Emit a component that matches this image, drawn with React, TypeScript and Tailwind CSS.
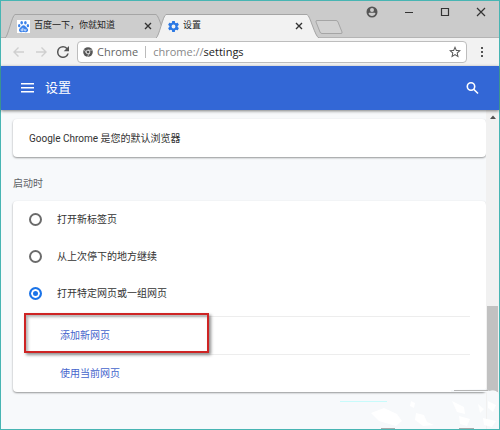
import { useState } from "react";
import type { ReactNode } from "react";

const startupOptions = [
	{ id: "new-tab", label: "打开新标签页" },
	{ id: "continue", label: "从上次停下的地方继续" },
	{ id: "specific", label: "打开特定网页或一组网页" },
];

function CloseIcon() {
	return (
		<svg viewBox="0 0 8 8" className="h-2 w-2" stroke="#333" strokeWidth="1.4">
			<path d="M1 1l6 6M7 1l-6 6" />
		</svg>
	);
}

function BaiduIcon() {
	return (
		<svg viewBox="0 0 13 13" className="h-[13px] w-[13px] shrink-0 bg-white" fill="#3b82ea">
			<ellipse cx="4.7" cy="2.7" rx="1.3" ry="1.8" />
			<ellipse cx="8.4" cy="2.7" rx="1.3" ry="1.8" />
			<ellipse cx="2.2" cy="5.7" rx="1.2" ry="1.6" />
			<ellipse cx="10.9" cy="5.7" rx="1.2" ry="1.6" />
			<path d="M6.5 5.2c1.3 0 1.8 1 2.6 1.8 1 1 2 1.7 2 3.1 0 1.5-1.2 2.3-2.5 2.1-.8-.1-1.4-.3-2.1-.3s-1.3.2-2.1.3C3.1 12.4 2 11.6 2 10.1c0-1.4 1-2.1 1.9-3.1.8-.8 1.3-1.8 2.6-1.8z" />
			<path d="M5.9 7.8v3H4.8a.8.8 0 0 1 0-1.7h1M7.3 8.9v1.3c0 .5.2.6.6.6h1V8.9" fill="none" stroke="#fff" strokeWidth=".7" />
		</svg>
	);
}

function GearIcon() {
	return (
		<svg viewBox="2 2 20 20" className="h-[11px] w-[11px] shrink-0" fill="#2b78e4">
			<path d="M19.43 12.98c.04-.32.07-.64.07-.98s-.03-.66-.07-.98l2.11-1.65c.19-.15.24-.42.12-.64l-2-3.46c-.12-.22-.39-.3-.61-.22l-2.49 1c-.52-.4-1.08-.73-1.69-.98l-.38-2.65C14.46 2.18 14.25 2 14 2h-4c-.25 0-.46.18-.49.42l-.38 2.65c-.61.25-1.17.59-1.69.98l-2.49-1c-.23-.09-.49 0-.61.22l-2 3.46c-.13.22-.07.49.12.64l2.11 1.65c-.04.32-.07.65-.07.98s.03.66.07.98l-2.11 1.65c-.19.15-.24.42-.12.64l2 3.46c.12.22.39.3.61.22l2.49-1c.52.4 1.08.73 1.69.98l.38 2.65c.03.24.24.42.49.42h4c.25 0 .46-.18.49-.42l.38-2.65c.61-.25 1.17-.59 1.69-.98l2.49 1c.23.09.49 0 .61-.22l2-3.46c.12-.22.07-.49-.12-.64l-2.11-1.65zM12 15.5a3.5 3.5 0 1 1 0-7 3.5 3.5 0 0 1 0 7z" />
		</svg>
	);
}

function Tab({ icon, title, active }: { icon: ReactNode; title: string; active?: boolean }) {
	return (
		<div className="relative -mr-3 flex h-6 w-full max-w-[163px] items-center gap-1 pr-4 pl-3">
			<svg
				viewBox="0 0 163 24"
				preserveAspectRatio="none"
				className="absolute inset-0 h-full w-full"
				fill={active ? "#f2f2f2" : "#cdcdcd"}
				stroke="#a5a5a5"
			>
				<path d="M0 24C3 23 7 1 10 .5H151C154 1 159 23 163 24" />
			</svg>
			<span className="relative">{icon}</span>
			<span className="relative flex-1 truncate text-[9px] text-[#222]">{title}</span>
			<button aria-label="关闭标签页" className="relative">
				<CloseIcon />
			</button>
		</div>
	);
}

function TitleBar() {
	return (
		<header className="flex h-[37px] justify-between border-b border-[#b4b4b4] bg-[#cbcbcb]">
			<div className="-mb-px flex flex-1 items-end pl-1">
				<Tab icon={<BaiduIcon />} title="百度一下，你就知道" />
				<Tab icon={<GearIcon />} title="设置" active />
				<button aria-label="新标签页" className="mb-1 ml-2">
					<svg viewBox="0 0 28 14" className="h-[14px] w-7" fill="#d2d2d2" stroke="#a5a5a5">
						<path d="M2 .5h19q1.5 0 2 1.5l4 10q.5 1.500-1 1.500H7q-1.500 0-2-1.500L1 2Q.5.5 2 .5z" />
					</svg>
				</button>
			</div>
			<div className="flex h-[22px] items-center gap-[26px] pr-[13px]">
				<button aria-label="用户">
					<svg viewBox="0 0 12 12" className="h-3 w-3" fill="#555">
						<path fillRule="evenodd" d="M6 .5a5.500 5.500 0 1 1 0 11 5.500 5.500 0 0 1 0-11zM6 2a2 2 0 1 0 0 4 2 2 0 0 0 0-4zM2.500 7.200C3.100 9 4.400 9.900 6 9.900s2.900-.9 3.500-2.700C8.700 6.500 7.400 6.800 6 6.800s-2.700-.3-3.500.4z" />
					</svg>
				</button>
				<button aria-label="最小化">
					<svg viewBox="0 0 10 10" className="h-[10px] w-[10px]" stroke="#333">
						<path d="M1 5.500h8" />
					</svg>
				</button>
				<button aria-label="最大化">
					<svg viewBox="0 0 10 10" className="h-[10px] w-[10px]" fill="none" stroke="#333" strokeWidth="1.2">
						<path d="M1.500 1.500h7v7h-7z" />
					</svg>
				</button>
				<button aria-label="关闭">
					<svg viewBox="0 0 10 10" className="h-[10px] w-[10px]" stroke="#333" strokeWidth="1.2">
						<path d="M1 1l8 8M9 1L1 9" />
					</svg>
				</button>
			</div>
		</header>
	);
}

function Toolbar() {
	return (
		<nav className="flex h-7 items-center bg-[#f2f2f2] px-3">
			<div className="flex items-center gap-[10px] pr-2">
				<button aria-label="后退">
					<svg viewBox="0 0 12 12" className="h-3 w-3" fill="none" stroke="#cfcfcf" strokeWidth="1.4">
						<path d="M11 6H1M5.500 1.500L1 6l4.500 4.500" />
					</svg>
				</button>
				<button aria-label="前进">
					<svg viewBox="0 0 12 12" className="h-3 w-3" fill="none" stroke="#cfcfcf" strokeWidth="1.4">
						<path d="M1 6H11M6.500 1.500L11 6l-4.500 4.500" />
					</svg>
				</button>
				<button aria-label="重新加载">
					<svg viewBox="4 4 16 16" className="h-3 w-3" fill="#555">
						<path d="M17.650 6.350A7.958 7.958 0 0 0 12 4a8 8 0 1 0 7.730 10h-2.080A6 6 0 1 1 12 6c1.660 0 3.140.69 4.220 1.780L13 11h7V4l-2.350 2.350z" />
					</svg>
				</button>
			</div>
			<div className="flex h-[22px] flex-1 items-center rounded-sm border border-[#bdbdbd] bg-white px-[5px] font-['Open_Sans','Noto_Sans',sans-serif] text-[11px]">
				<svg viewBox="0 0 10 10" className="h-[10px] w-[10px]" fill="#555">
					<circle cx="5" cy="5" r="4.8" />
					<circle cx="5" cy="5" r="1.9" fill="#555" stroke="#fff" strokeWidth=".8" />
					<path d="M5 3.100h4.400M3.300 6L1.200 2.500M6.600 6L4.500 9.600" stroke="#fff" strokeWidth=".6" />
				</svg>
				<span className="ml-1 text-[#666]">Chrome</span>
				<span className="mx-[7px] h-3 w-px bg-[#bbb]" />
				<span className="flex-1 text-[#888]">
					chrome://<span className="text-[#222]">settings</span>
				</span>
				<button aria-label="收藏">
					<svg viewBox="2 2 20 20" className="h-3 w-3" fill="#555">
						<path d="M22 9.240l-7.190-.62L12 2 9.190 8.630 2 9.240l5.460 4.730L5.820 21 12 17.270 18.180 21l-1.630-7.030L22 9.240zM12 15.400l-3.760 2.270 1-4.280-3.320-2.880 4.380-.38L12 6.100l1.710 4.040 4.380.38-3.320 2.880 1 4.280L12 15.400z" />
					</svg>
				</button>
			</div>
			<button aria-label="菜单" className="ml-[10px]">
				<svg viewBox="0 0 10 12" className="h-3 w-[10px]" fill="#555">
					<path d="M4 1h2v2H4zM4 5h2v2H4zM4 9h2v2H4z" />
				</svg>
			</button>
		</nav>
	);
}

function SettingsHeader() {
	return (
		<div className="relative z-10 flex h-11 items-center bg-[#3367d6] px-5 text-white shadow-[0_1px_3px_rgba(0,0,0,0.5)]">
			<button aria-label="主菜单">
				<svg viewBox="0 0 14 12" className="h-3 w-[14px]" fill="#fff">
					<path d="M0 1h13v1.500H0zM0 5h13v1.500H0zM0 9h13v1.500H0z" />
				</svg>
			</button>
			<h1 className="ml-[10px] flex-1 text-[13px]">设置</h1>
			<button aria-label="搜索">
				<svg viewBox="0 0 14 14" className="h-[14px] w-[14px]" fill="none" stroke="#fff" strokeWidth="1.6">
					<circle cx="6" cy="5.5" r="3.7" />
					<path d="M8.700 8.200l4.300 4.300" />
				</svg>
			</button>
		</div>
	);
}

function StartupCard() {
	const [selected, setSelected] = useState("specific");

	return (
		<div className="rounded-sm bg-white shadow-[0_1px_2px_rgba(0,0,0,0.4)]">
			{startupOptions.map(({ id, label }) => (
				<label key={id} className="flex h-[37px] items-center gap-[15px] pl-4">
					<input
						type="radio"
						name="startup"
						checked={selected === id}
						onChange={() => setSelected(id)}
						className="h-[13px] w-[13px] appearance-none rounded-full border-2 border-[#6b6b6b] bg-white checked:border-[#1a73e8] checked:bg-[#1a73e8] checked:shadow-[inset_0_0_0_2px_white]"
					/>
					{label}
				</label>
			))}
			<div className="mt-1 mr-4 ml-[47px] text-[#4564cc]">
				<div className="relative flex h-[38px] items-center border-t border-[#ededed]">
					<button>添加新网页</button>
					{/* Highlight frame */}
					<div className="pointer-events-none absolute -top-1 -left-9 h-10 w-[185px] border-2 border-[#ce2424] shadow-[2px_2px_3px_rgba(0,0,0,0.45),inset_2px_2px_3px_rgba(0,0,0,0.3)]" />
				</div>
				<div className="flex h-[38px] items-center border-t border-[#ededed]">
					<button>使用当前网页</button>
				</div>
			</div>
		</div>
	);
}

function Scrollbar() {
	return (
		<div className="flex w-[13px] flex-col items-center bg-[#f1f1f1] pt-[5px]">
			<svg viewBox="0 0 6 4" className="h-1 w-[6px]" fill="#505050">
				<path d="M0 4l3-3.500L6 4z" />
			</svg>
			<div className="flex-[187]" />
			<div className="w-[11px] flex-[86] bg-[#c1c1c1]" />
			<div className="flex-[37]" />
		</div>
	);
}

function Watermark() {
	return (
		<svg viewBox="0 0 164 40" className="pointer-events-none absolute right-0 bottom-0 h-10 w-[164px]">
			<path d="M116 1l37-1 8 2 3 3v35h-12V3h-36z" fill="#f6f8fa" />
			<path d="M119 1.500h34" stroke="#b5b5b5" />
			<path d="M151 0h11l-3 1-5 1z" fill="#c1c1c1" />
			<path d="M5 12.500h47" stroke="#c8fbfb" />
			<path d="M36 24l13-5 13 6 5 7-6 5-17-5zM76 12l4 2-1 5-4-2zM81 24l8 2 3 7 7 3-11 1-8-6zM117 12l12 6 1 7-8-2zM124 27l11 3-3 7-7-2zM143 15l6 5-4 4zM153 12l8 4-3 7-5-4zM148 29l13 3-4 6-8-2z" fill="#fff" />
			<path d="M46 39.500h14M124 39.500h15" stroke="#aaa" />
		</svg>
	);
}

export default function App() {
	return (
		<div className="relative flex min-h-screen flex-col border border-[#48b5b3] bg-[#f7f9fb] font-['Roboto','Noto_Sans_CJK_SC',sans-serif] text-[10px] text-[#333]">
			<TitleBar />
			<Toolbar />
			<SettingsHeader />
			<div className="flex flex-1">
				<main className="flex-1 pt-[9px] pb-8 pl-3">
					<div className="flex h-[38px] items-center rounded-sm bg-white px-4 shadow-[0_1px_2px_rgba(0,0,0,0.4)]">
						Google Chrome 是您的默认浏览器
					</div>
					<h2 className="pt-[19px] pb-[9px] leading-4 text-[#5f6368]">启动时</h2>
					<StartupCard />
				</main>
				<Scrollbar />
			</div>
			<Watermark />
		</div>
	);
}
